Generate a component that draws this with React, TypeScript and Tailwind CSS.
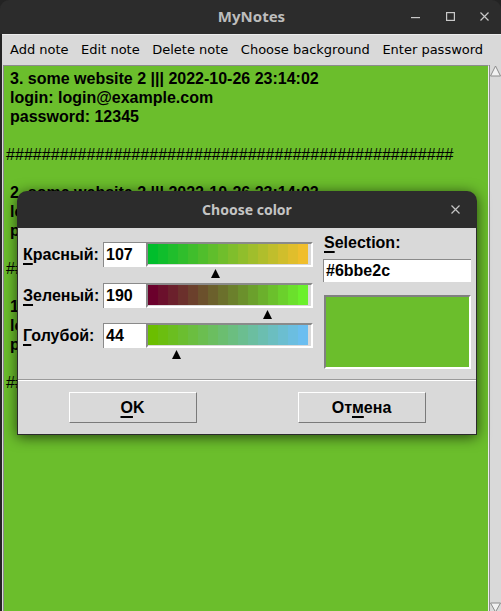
const NOTES = [3, 2, 1];
const HASHES = "#".repeat(50);

const MENU = ["Add note", "Edit note", "Delete note", "Choose background", "Enter password"];

const BASE = [107, 190, 44];

const ROWS = [
  { key: "r", first: "К", rest: "расный:", value: 107, channel: 0, height: "h-[41px]" },
  { key: "g", first: "З", rest: "еленый:", value: 190, channel: 1, height: "h-[40px]" },
  { key: "b", first: "Г", rest: "олубой:", value: 44, channel: 2, height: "h-[40px]" },
];

function ColorBar({ channel }: { channel: number }) {
  // 16 flat blocks, like the Tk colour chooser draws them
  const blocks = Array.from({ length: 16 }, (_, i) => {
    const c = [...BASE];
    c[channel] = i * 16;
    return `rgb(${c.join(",")})`;
  });
  return (
    <div className="h-[25px] w-[167px] border-2 border-t-[#8a8a8a] border-l-[#8a8a8a] border-b-white border-r-white bg-[#d9d9d9]">
      <div className="flex h-[20px] w-[160px]">
        {blocks.map((bg, i) => (
          <div key={i} className="h-full w-[10px]" style={{ backgroundColor: bg }} />
        ))}
      </div>
    </div>
  );
}

function Marker({ value }: { value: number }) {
  const left = 2.5 + (value / 255) * 160 - 4.5;
  return (
    <div className="pl-[123px] pt-[2px]">
      <svg width="9" height="9" viewBox="0 0 9 9" style={{ marginLeft: left }} aria-hidden>
        <polygon points="4.5,0 9,9 0,9" fill="#000" />
      </svg>
    </div>
  );
}

function ChooseColorDialog() {
  return (
    <div className="absolute left-[17px] top-[191px] flex h-[244px] w-[460px] flex-col overflow-hidden rounded-t-[10px] bg-[#2c2c2c] shadow-[0_2px_14px_rgba(0,0,0,0.65)]">
      {/* title bar */}
      <div className="grid h-[37px] shrink-0 grid-cols-[40px_1fr_40px] items-center font-['Noto_Sans',sans-serif] text-[14px] font-bold text-[#c4c4c4]">
        <span />
        <span className="text-center">Choose color</span>
        <span className="flex justify-center pr-[3px]">
          <svg width="9" height="9" viewBox="0 0 9 9" aria-hidden>
            <path d="M0.5 0.5 L8.5 8.5 M8.5 0.5 L0.5 8.5" stroke="#c4c4c4" strokeWidth="1.2" />
          </svg>
        </span>
      </div>

      {/* body */}
      <div className="mx-px mb-px flex flex-1 flex-col bg-[#d9d9d9] font-['Liberation_Sans',sans-serif] text-[16px] font-bold text-black">
        <div className="flex h-[151px] shrink-0 pl-[5px]">
          <div className="flex flex-col pt-[14px]">
            {ROWS.map((r) => (
              <div key={r.key} className={`flex flex-col ${r.height}`}>
                <div className="flex h-[25px] items-center">
                  <span className="w-[80px] whitespace-nowrap">
                    <span className="underline decoration-2 underline-offset-[3px]">{r.first}</span>
                    {r.rest}
                  </span>
                  <div className="flex h-[25px] w-[43px] items-center border-t border-l border-[#8a8a8a] bg-white pl-[2px]">
                    {r.value}
                  </div>
                  <ColorBar channel={r.channel} />
                </div>
                <Marker value={r.value} />
              </div>
            ))}
          </div>

          <div className="ml-[10px] flex w-[148px] flex-col pt-[5px]">
            <span className="h-[19px] pl-px leading-[19px]">
              <span className="underline decoration-2 underline-offset-[3px]">S</span>election:
            </span>
            <div className="mt-[7px] flex h-[23px] items-center border-t border-l border-[#8a8a8a] bg-white pl-[2px]">
              #6bbe2c
            </div>
            <div className="ml-px mt-[13px] h-[74px] w-[147px] border-2 border-t-[#808080] border-l-[#808080] border-b-white border-r-white bg-[#6bbe2c]" />
          </div>
        </div>

        <div className="h-px bg-[#9a9a9a]" />
        <div className="h-px bg-white" />

        <div className="grid grid-cols-2 pt-[11px]">
          <div className="flex justify-center">
            <button
              type="button"
              className="flex h-[31px] w-[128px] items-center justify-center border border-t-white border-l-white border-b-[#7a7a7a] border-r-[#7a7a7a] bg-[#d9d9d9]"
            >
              <span className="underline decoration-2 underline-offset-[3px]">O</span>K
            </button>
          </div>
          <div className="flex justify-center">
            <button
              type="button"
              className="flex h-[31px] w-[128px] items-center justify-center border border-t-white border-l-white border-b-[#7a7a7a] border-r-[#7a7a7a] bg-[#d9d9d9]"
            >
              От<span className="underline decoration-2 underline-offset-[3px]">м</span>ена
            </button>
          </div>
        </div>
      </div>
    </div>
  );
}

export default function App() {
  return (
    <div className="relative h-[611px] w-[501px] overflow-hidden bg-[#232323]">
      <div className="flex h-full flex-col">
        {/* window title bar */}
        <div className="grid h-[34px] shrink-0 grid-cols-[1fr_auto_1fr] items-center rounded-t-[9px] bg-[#2c2c2c] pb-[2px] font-['Noto_Sans',sans-serif] text-[15px] font-bold text-[#bdbdbd]">
          <span />
          <span className="pl-[2px]">MyNotes</span>
          <div className="flex justify-end">
            <span className="flex h-[32px] w-[34px] items-center justify-center pt-[3px]">
              <svg width="10" height="2" viewBox="0 0 10 2" aria-hidden>
                <rect x="0" y="0" width="9" height="1.2" fill="#c8c8c8" />
              </svg>
            </span>
            <span className="flex h-[32px] w-[34px] items-center justify-center">
              <svg width="9" height="9" viewBox="0 0 9 9" aria-hidden>
                <rect x="0.6" y="0.6" width="7.8" height="7.8" fill="none" stroke="#c8c8c8" strokeWidth="1.2" />
              </svg>
            </span>
            <span className="flex h-[32px] w-[34px] items-center justify-center">
              <svg width="9" height="9" viewBox="0 0 9 9" aria-hidden>
                <path d="M0.5 0.5 L8.5 8.5 M8.5 0.5 L0.5 8.5" stroke="#c8c8c8" strokeWidth="1.2" />
              </svg>
            </span>
          </div>
        </div>

        <div className="ml-[2px] flex flex-1 flex-col bg-[#d9d9d9]">
          {/* menu bar */}
          <div className="flex h-[31px] shrink-0 items-center gap-[12.5px] border-t border-[#ececec] pl-[8px] font-['DejaVu_Sans',sans-serif] text-[13px] text-black">
            {MENU.map((m) => (
              <span key={m} className="whitespace-nowrap">
                {m}
              </span>
            ))}
          </div>

          {/* text widget + scrollbar */}
          <div className="flex flex-1 pl-px">
            <div className="flex-1 overflow-hidden border-t border-l border-[#8c8c8c] border-r border-r-[#eeeeee] bg-[#6bbe2c] pl-[2px] pt-[3px] font-['Liberation_Sans',sans-serif] text-[16px] leading-[19px] text-black">
              {NOTES.map((n) => (
                <div key={n}>
                  <div className="pl-[4px] font-bold whitespace-nowrap">{n}. some website 2 ||| 2022-10-26 23:14:02</div>
                  <div className="pl-[4px] font-bold">login: login@example.com</div>
                  <div className="pl-[4px] font-bold">password: 12345</div>
                  <div className="h-[19px]" />
                  <div className="whitespace-nowrap text-[16.1px]">{HASHES}</div>
                  <div className="h-[19px]" />
                </div>
              ))}
            </div>
            <div className="flex w-[12px] flex-col justify-between border-l border-[#8c8c8c] bg-[#d9d9d9]">
              <svg width="11" height="12" viewBox="0 0 11 12" aria-hidden>
                <polygon points="5.5,1 10.5,11 0.5,11" fill="#f2f2f2" stroke="#8c8c8c" strokeWidth="1" />
              </svg>
              <svg width="11" height="9" viewBox="0 0 11 9" aria-hidden>
                <polygon points="0.5,1 10.5,1 5.5,10" fill="#f2f2f2" stroke="#8c8c8c" strokeWidth="1" />
              </svg>
            </div>
          </div>
        </div>
      </div>

      <ChooseColorDialog />
    </div>
  );
}
